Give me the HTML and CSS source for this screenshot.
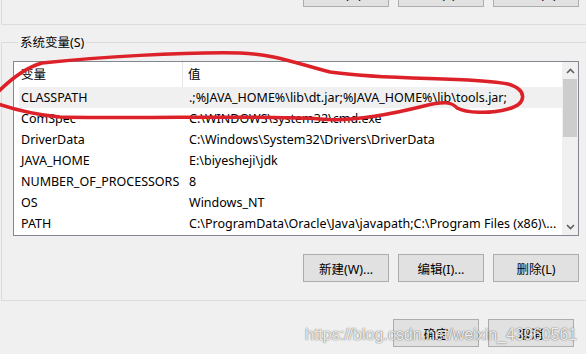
FILE: index.html
```html
<!DOCTYPE html>
<html lang="zh-CN">
<head>
    <meta charset="UTF-8">
    <meta name="viewport" content="width=device-width, initial-scale=1.0">
    <title>环境变量</title>
    <link rel="stylesheet" href="styles.css">
</head>
<body>
    <div class="user-group">
        <button class="btn">新建(N)...</button>
        <button class="btn">编辑(E)...</button>
        <button class="btn">删除(D)</button>
    </div>

    <fieldset class="sys-group">
        <legend>系统变量(S)</legend>
        <div class="listview">
            <div class="list-main">
                <div class="list-head">
                    <div class="head-name">变量</div>
                    <div class="head-value">值</div>
                </div>
                <div class="row selected"><span class="name">CLASSPATH</span><span class="value">.;%JAVA_HOME%\lib\dt.jar;%JAVA_HOME%\lib\tools.jar;</span></div>
                <div class="row"><span class="name">ComSpec</span><span class="value">C:\WINDOWS\system32\cmd.exe</span></div>
                <div class="row"><span class="name">DriverData</span><span class="value">C:\Windows\System32\Drivers\DriverData</span></div>
                <div class="row"><span class="name">JAVA_HOME</span><span class="value">E:\biyesheji\jdk</span></div>
                <div class="row"><span class="name">NUMBER_OF_PROCESSORS</span><span class="value">8</span></div>
                <div class="row"><span class="name">OS</span><span class="value">Windows_NT</span></div>
                <div class="row"><span class="name">PATH</span><span class="value">C:\ProgramData\Oracle\Java\javapath;C:\Program Files (x86)\...</span></div>
            </div>
            <div class="scrollbar">
                <div class="arrow">
                    <svg width="9" height="6" viewBox="0 0 9 6"><path d="M1 5 L4.5 1.5 L8 5" fill="none" stroke="#606060" stroke-width="1.6"/></svg>
                </div>
                <div class="thumb"></div>
                <div class="track"></div>
                <div class="arrow">
                    <svg width="9" height="6" viewBox="0 0 9 6"><path d="M1 1 L4.5 4.5 L8 1" fill="none" stroke="#606060" stroke-width="1.6"/></svg>
                </div>
            </div>
        </div>
        <div class="btn-row group-row">
            <button class="btn">新建(W)...</button>
            <button class="btn">编辑(I)...</button>
            <button class="btn">删除(L)</button>
        </div>
    </fieldset>

    <div class="btn-row dialog-row">
        <button class="btn">确定</button>
        <button class="btn">取消</button>
    </div>

    <div class="watermark">https://blog.csdn.net/weixin_43960561</div>

    <svg class="scribble" width="586" height="354" viewBox="0 0 586 354">
        <path d="M -2 92 C 10 80, 24 68, 42 63 C 100 57, 180 52, 240 53 C 272 54, 292 62, 330 72 C 390 81, 470 76, 508 84 C 528 90, 527 104, 508 109 C 490 114, 466 113, 457 108 C 452 102, 444 101, 424 106 C 392 114, 350 122, 320 119 C 250 115, 150 119, 60 117 C 36 115, 16 110, -2 104"
              fill="none" stroke="#dd2128" stroke-width="3.5" stroke-linecap="round" stroke-linejoin="round"/>
    </svg>
</body>
</html>
```

FILE: styles.css
```css
body{
    margin: 0;
    width: 586px;
    height: 354px;
    overflow: hidden;
    background: #f0f0f0;
    font-family: "Noto Sans", "Noto Sans CJK SC", sans-serif;
    font-size: 12.5px;
    color: #000;
    position: relative;
}

.btn{
    width: 86px;
    height: 28px;
    padding: 0;
    margin: 0;
    background: #e1e1e1;
    border: 1px solid #adadad;
    font-family: inherit;
    font-size: 12.5px;
    color: #000;
    flex: none;
}

.btn-row{
    display: flex;
    justify-content: flex-end;
    gap: 9px;
}

/* upper group, only its bottom edge is visible */
.user-group{
    height: 25px;
    margin-left: 1px;
    padding: 0 7px 17px 0;
    border-left: 1px solid #dcdcdc;
    border-bottom: 1px solid #dcdcdc;
    box-sizing: border-box;
    display: flex;
    justify-content: flex-end;
    align-items: flex-end;
    gap: 9px;
}

.sys-group{
    margin: 8px 0 0 1px;
    padding: 0 0 18px 11px;
    width: 600px;
    border: 1px solid #dcdcdc;
    box-sizing: border-box;
}
.sys-group legend{
    margin-left: 5px;
    padding: 0 2px;
    line-height: 19px;
}

.listview{
    margin-top: 9px;
    width: 566px;
    height: 175px;
    border: 1px solid #828790;
    box-sizing: border-box;
    background: #fff;
    display: grid;
    grid-template-columns: minmax(0, 1fr) 16px;
    overflow: hidden;
}
.list-main{
    overflow: hidden;
}

.list-head{
    display: flex;
    height: 25px;
}
.head-name{
    width: 169px;
    padding-left: 7px;
    box-sizing: border-box;
    border-right: 1px solid #e5e5e5;
    line-height: 25px;
}
.head-value{
    padding-left: 5px;
    line-height: 25px;
}

.row{
    display: flex;
    height: 21px;
    line-height: 21px;
    margin-left: 5px;
    white-space: nowrap;
}
.row.selected{
    background: #f0f0f0;
}
.row .name{
    width: 164px;
    padding-left: 2px;
    box-sizing: border-box;
    flex: none;
}
.row .value{
    padding-left: 6px;
}

.scrollbar{
    background: #f0f0f0;
    display: flex;
    flex-direction: column;
}
.scrollbar .arrow{
    height: 17px;
    display: flex;
    align-items: center;
    justify-content: center;
    flex: none;
}
.scrollbar .thumb{
    height: 58px;
    margin: 0 1px;
    background: #cdcdcd;
    flex: none;
}
.scrollbar .track{
    flex: 1;
}

.group-row{
    margin-top: 18px;
    width: 566px;
}

.dialog-row{
    margin-top: 18px;
    padding-right: 12px;
}

.watermark{
    position: absolute;
    left: 305px;
    top: 326px;
    font-family: "Liberation Sans", Arial, sans-serif;
    font-size: 16px;
    color: rgba(255, 255, 255, 0.9);
    text-shadow: 0 0 1px rgba(0, 0, 0, 0.6), 0 0 2px rgba(0, 0, 0, 0.25);
    white-space: nowrap;
}

.scribble{
    position: absolute;
    left: 0;
    top: 0;
    pointer-events: none;
}
```
